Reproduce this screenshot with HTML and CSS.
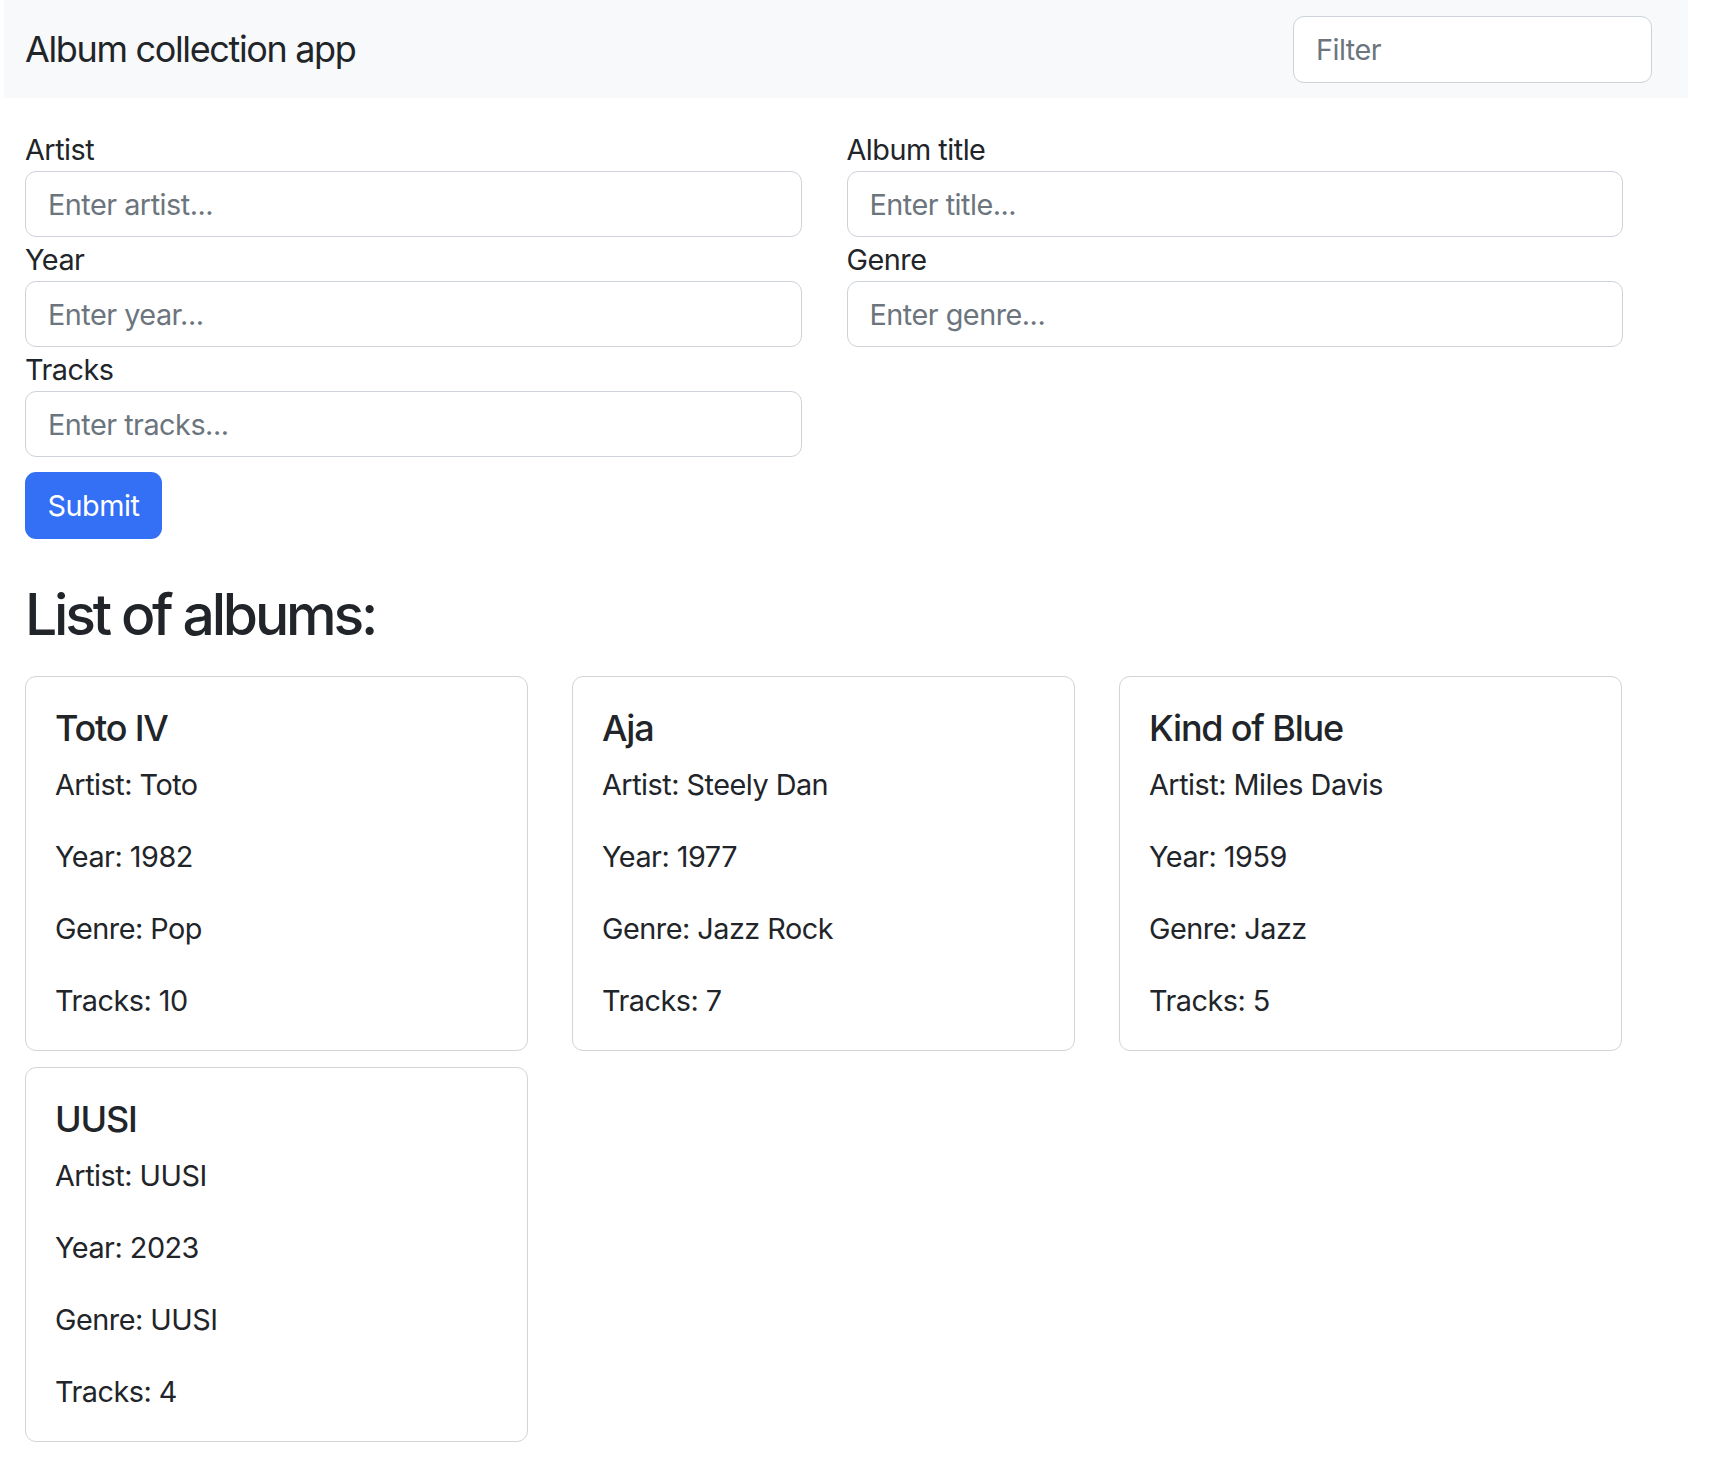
FILE: index.html
```html
<!DOCTYPE html>
<html lang="en">
<head>
<meta charset="utf-8">
<title>Album collection app</title>
<link rel="stylesheet" href="styles.css">
</head>
<body>
<nav class="navbar">
  <span class="brand">Album collection app</span>
  <input class="control filter" type="text" placeholder="Filter">
</nav>
<main class="main">
  <form class="album-form">
    <div class="field">
      <label class="label">Artist</label>
      <input class="control" type="text" placeholder="Enter artist...">
    </div>
    <div class="field">
      <label class="label">Album title</label>
      <input class="control" type="text" placeholder="Enter title...">
    </div>
    <div class="field">
      <label class="label">Year</label>
      <input class="control" type="text" placeholder="Enter year...">
    </div>
    <div class="field">
      <label class="label">Genre</label>
      <input class="control" type="text" placeholder="Enter genre...">
    </div>
    <div class="field">
      <label class="label">Tracks</label>
      <input class="control" type="text" placeholder="Enter tracks...">
    </div>
  </form>
  <button class="submit" type="button">Submit</button>
  <h2 class="list-title">List of albums:</h2>
  <div class="cards">
    <div class="card">
      <h5 class="card-title">Toto IV</h5>
      <p>Artist: Toto</p>
      <p>Year: 1982</p>
      <p>Genre: Pop</p>
      <p>Tracks: 10</p>
    </div>
    <div class="card">
      <h5 class="card-title">Aja</h5>
      <p>Artist: Steely Dan</p>
      <p>Year: 1977</p>
      <p>Genre: Jazz Rock</p>
      <p>Tracks: 7</p>
    </div>
    <div class="card">
      <h5 class="card-title">Kind of Blue</h5>
      <p>Artist: Miles Davis</p>
      <p>Year: 1959</p>
      <p>Genre: Jazz</p>
      <p>Tracks: 5</p>
    </div>
    <div class="card">
      <h5 class="card-title">UUSI</h5>
      <p>Artist: UUSI</p>
      <p>Year: 2023</p>
      <p>Genre: UUSI</p>
      <p>Tracks: 4</p>
    </div>
  </div>
</main>
</body>
</html>
```
FILE: styles.css
```css
* { box-sizing: border-box; }

body {
  margin: 0;
  background: #ffffff;
  color: #212529;
  font-family: Inter, "Liberation Sans", sans-serif;
  font-size: 28.8px;
  line-height: 1.5;
  letter-spacing: -0.5px;
}

.navbar {
  margin-left: 4px;
  width: 1684px;
  height: 98px;
  background: #f8f9fa;
  display: flex;
  align-items: center;
  justify-content: space-between;
  padding: 0 36px 0 21px;
}

.brand {
  font-size: 36px;
  line-height: 54px;
  letter-spacing: -1.35px;
  color: #212529;
}

.control {
  display: block;
  width: 100%;
  height: 66px;
  padding: 0 22px;
  font-family: inherit;
  font-size: 28.8px;
  letter-spacing: -0.5px;
  color: #212529;
  background: #ffffff;
  border: 1px solid #cdd3d9;
  border-radius: 11px;
  outline: none;
}

.control::placeholder { color: #6c757d; }

.filter {
  width: 359px;
  height: 67px;
}

.main {
  width: 1623px;
  padding: 29px 0 0 25px;
}

.album-form {
  display: grid;
  grid-template-columns: 1fr 1fr;
  column-gap: 45px;
}

.label {
  display: block;
  height: 44px;
  line-height: 46px;
}

.submit {
  display: block;
  margin-top: 15px;
  width: 137px;
  height: 67px;
  padding: 0;
  font-family: inherit;
  font-size: 28.8px;
  letter-spacing: -0.5px;
  color: #ffffff;
  background: #3470f5;
  border: none;
  border-radius: 11px;
}

.list-title {
  margin: 42px 0 27px;
  font-size: 57px;
  font-weight: 500;
  line-height: 1.2;
  letter-spacing: -3.2px;
}

.cards {
  display: grid;
  grid-template-columns: repeat(3, 503px);
  column-gap: 44px;
  row-gap: 16px;
}

.card {
  border: 1px solid #d3d4d5;
  border-radius: 11px;
  padding: 30px 29px 28px;
}

.card-title {
  margin: 0 0 12.4px;
  font-size: 36px;
  font-weight: 500;
  line-height: 1.2;
  letter-spacing: -1.2px;
}

.card p {
  margin: 0 0 28.8px;
  line-height: 43.2px;
}

.card p:last-child { margin-bottom: 0; }
```
